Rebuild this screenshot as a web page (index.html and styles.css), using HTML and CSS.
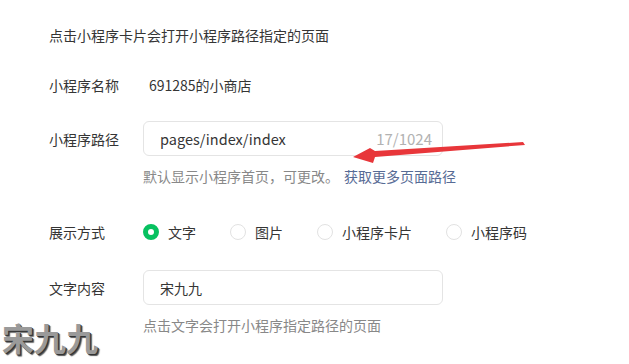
FILE: index.html
```html
<!DOCTYPE html>
<html lang="zh-CN">
<head>
    <meta charset="UTF-8">
    <meta name="viewport" content="width=device-width, initial-scale=1.0">
    <title>小程序链接</title>
    <link rel="stylesheet" href="styles.css">
</head>
<body>
    <div class="form">
        <p class="intro">点击小程序卡片会打开小程序路径指定的页面</p>

        <div class="row name-row">
            <span class="label">小程序名称</span>
            <span class="value">691285的小商店</span>
        </div>

        <div class="row path-row">
            <span class="label">小程序路径</span>
            <div class="input">
                <span class="input-text">pages/index/index</span>
                <span class="counter">17/1024</span>
            </div>
        </div>
        <p class="hint">默认显示小程序首页，可更改。<a class="link" href="#">获取更多页面路径</a></p>

        <div class="row mode-row">
            <span class="label">展示方式</span>
            <div class="radios">
                <label class="radio checked"><i></i>文字</label>
                <label class="radio"><i></i>图片</label>
                <label class="radio"><i></i>小程序卡片</label>
                <label class="radio"><i></i>小程序码</label>
            </div>
        </div>

        <div class="row text-row">
            <span class="label">文字内容</span>
            <div class="input">
                <span class="input-text">宋九九</span>
            </div>
        </div>
        <p class="hint">点击文字会打开小程序指定路径的页面</p>
    </div>

    <!-- annotation arrow over the screenshot -->
    <svg class="arrow" width="629" height="364" viewBox="0 0 629 364">
        <polygon points="523,142 525,145 375,157 373,163 353,157 370,148 375,151" fill="#e8363a"/>
    </svg>

    <div class="stamp">宋九九</div>
</body>
</html>
```

FILE: styles.css
```css
* {
    padding: 0;
    margin: 0;
    box-sizing: border-box;
}

body {
    width: 629px;
    height: 364px;
    overflow: hidden;
    background: #fff;
    color: #353535;
    font-family: "Microsoft YaHei", "Noto Sans CJK SC", sans-serif;
    font-size: 14px;
    position: relative;
}

.form {
    display: flex;
    flex-direction: column;
    padding: 25px 0 0 49px;
}

.intro {
    line-height: 20px;
}

.row {
    display: flex;
    align-items: center;
}

.label {
    width: 94px;
    flex-shrink: 0;
    line-height: 20px;
}

.name-row {
    margin-top: 30px;
}

.name-row .value {
    margin-left: 6px;
    line-height: 20px;
}

.path-row {
    margin-top: 26px;
}

.input {
    width: 300px;
    height: 35px;
    border: 1px solid #e4e4e4;
    border-radius: 6px;
    display: flex;
    align-items: center;
    justify-content: space-between;
    padding: 0 10px 0 16px;
    font-size: 14.5px;
}

.input-text {
    color: #353535;
}

.counter {
    color: #b2b2b2;
    font-size: 15px;
}

.hint {
    margin: 10px 0 0 94px;
    line-height: 20px;
    color: #888;
}

.link {
    color: #576b95;
    text-decoration: none;
    margin-left: 5px;
}

.mode-row {
    margin-top: 36px;
}

.radios {
    display: flex;
    gap: 34px;
}

.radio {
    display: flex;
    align-items: center;
    gap: 9px;
    line-height: 20px;
}

.radio i {
    width: 16px;
    height: 16px;
    border-radius: 50%;
    border: 1px solid #e2e2e2;
    display: block;
}

.radio.checked i {
    border: 5px solid #07c160;
    background: #fff;
}

.text-row {
    margin-top: 28px;
}

.text-row .input {
    font-size: 14px;
}

.arrow {
    position: absolute;
    left: 0;
    top: 0;
}

.stamp {
    position: absolute;
    left: 2px;
    top: 317px;
    font-size: 32px;
    font-weight: bold;
    line-height: 40px;
    color: #9a9a9a;
    text-shadow: 1px 1px 0 #333, 2px 2px 1px #555;
}
```
